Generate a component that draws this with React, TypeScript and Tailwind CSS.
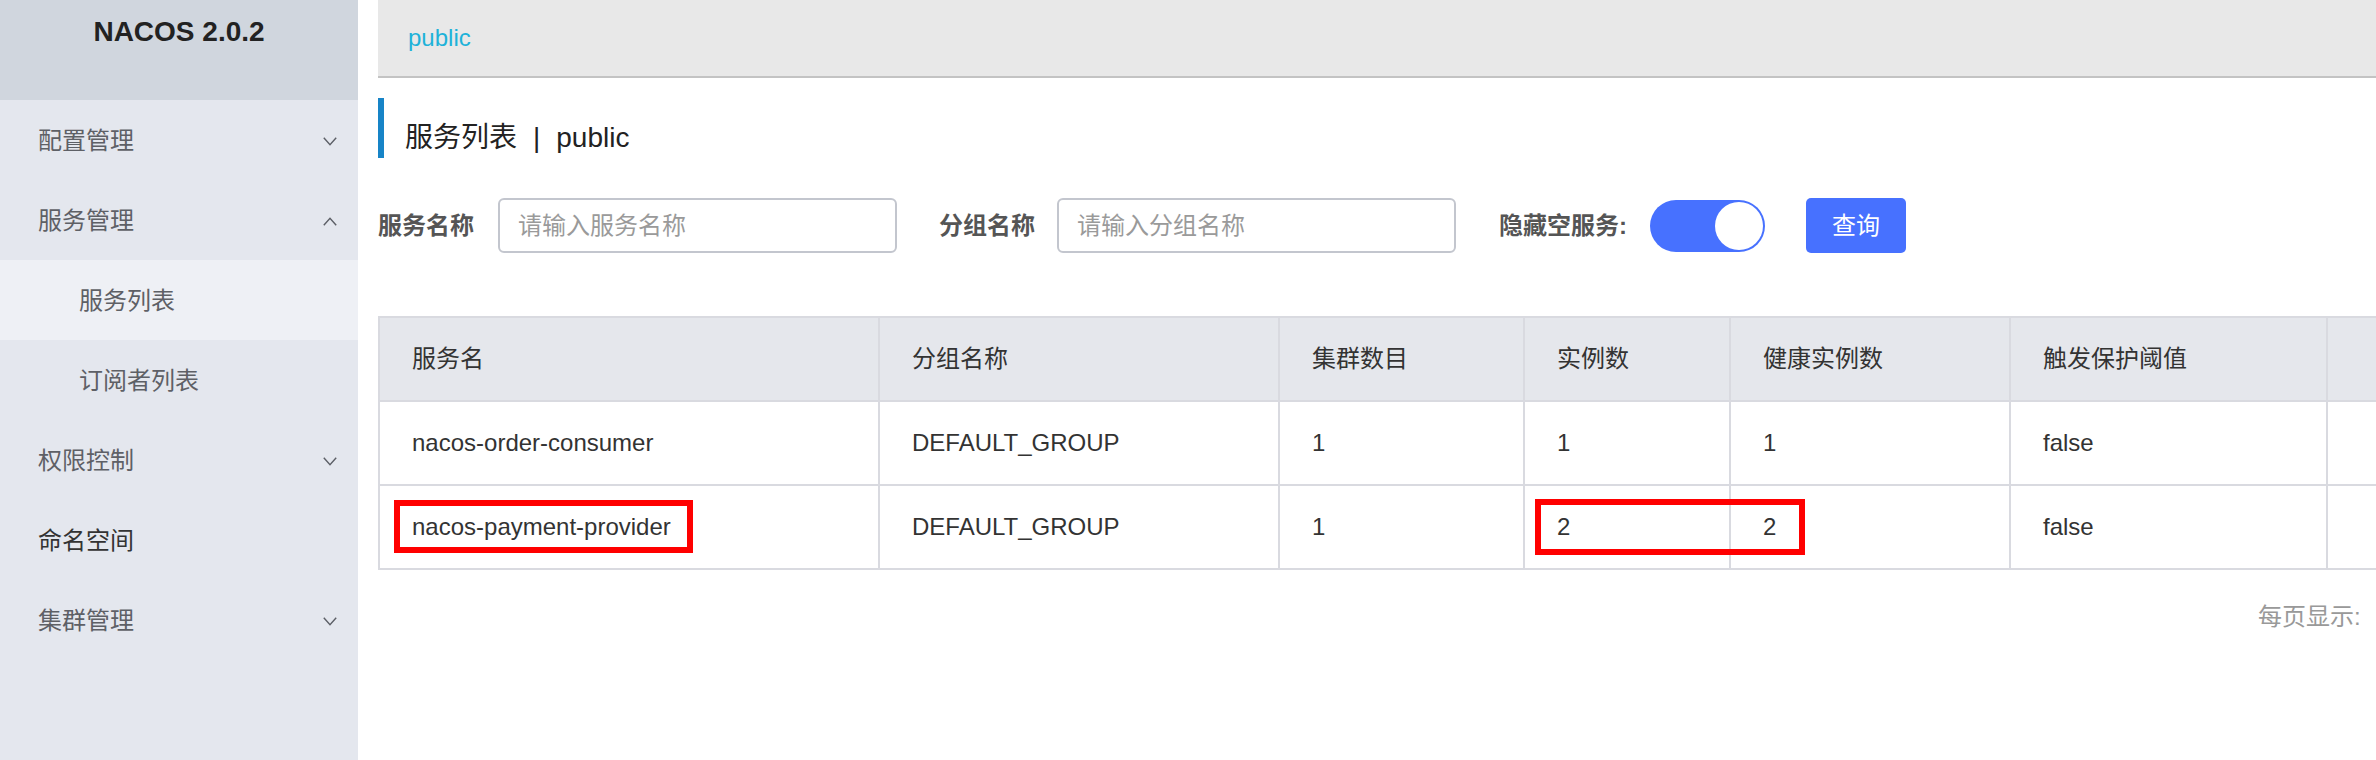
import React from 'react'

const Chevron = ({ up = false }: { up?: boolean }) => (
  <svg width="14" height="9" viewBox="0 0 14 9" fill="none" stroke="#5c5f66" strokeWidth="1.4">
    <polyline points={up ? '0.8,8.3 7,1.2 13.2,8.3' : '0.8,0.7 7,7.8 13.2,0.7'} />
  </svg>
)

const menuItems = [
  { name: '配置管理', chevron: 'down' },
  { name: '服务管理', chevron: 'up' },
  { name: '服务列表', sub: true, active: true },
  { name: '订阅者列表', sub: true },
  { name: '权限控制', chevron: 'down' },
  { name: '命名空间', dark: true },
  { name: '集群管理', chevron: 'down' },
]

const headers = ['服务名', '分组名称', '集群数目', '实例数', '健康实例数', '触发保护阈值', '']

const rows = [
  ['nacos-order-consumer', 'DEFAULT_GROUP', '1', '1', '1', 'false', ''],
  ['nacos-payment-provider', 'DEFAULT_GROUP', '1', '2', '2', 'false', ''],
]

const Sidebar = () => (
  <aside className="w-[358px] shrink-0 h-full bg-[#e4e7ee]">
    {/* Logo */}
    <div className="h-[100px] bg-[#d0d6de] pt-[18px] text-center">
      <span className="text-[28px] leading-[28px] font-bold text-[#222]">NACOS 2.0.2</span>
    </div>

    {menuItems.map((item) => (
      <div
        key={item.name}
        className={`h-[80px] flex items-center pt-[2px] pr-[21px] text-[24px] ${item.sub ? 'pl-[79px]' : 'pl-[38px]'} ${
          item.active ? 'bg-[#eef0f5]' : ''
        } ${item.dark ? 'text-[#333]' : 'text-[#5e6066]'}`}
      >
        <span className="flex-1">{item.name}</span>
        {item.chevron && <Chevron up={item.chevron === 'up'} />}
      </div>
    ))}
  </aside>
)

const FilterBar = () => (
  <div className="mt-[40px] h-[55px] flex items-center text-[24px]">
    <span className="font-bold text-[#555] mr-[24px]">服务名称</span>
    <div className="w-[399px] h-[55px] rounded-[6px] border-2 border-[#c3c6ce] flex items-center pl-[18px] text-[#9a9a9a]">
      请输入服务名称
    </div>
    <span className="font-bold text-[#555] ml-[42px] mr-[22px]">分组名称</span>
    <div className="w-[399px] h-[55px] rounded-[6px] border-2 border-[#c3c6ce] flex items-center pl-[18px] text-[#9a9a9a]">
      请输入分组名称
    </div>
    <span className="font-bold text-[#555] ml-[43px] mr-[23px]">隐藏空服务:</span>
    {/* toggle, on */}
    <div className="w-[115px] h-[52px] rounded-full bg-[#4771ff] p-[2px] flex justify-end">
      <div className="w-[48px] h-[48px] rounded-full bg-white" />
    </div>
    <button className="ml-[41px] w-[100px] h-[55px] rounded-[5px] bg-[#4771ff] text-white text-[24px]">
      查询
    </button>
  </div>
)

const ServiceTable = () => (
  <div className="mt-[63px] grid grid-cols-[500px_400px_245px_206px_280px_317px_240px] border-t-2 border-l-2 border-[#d9dae0] w-max text-[24px] text-[#333]">
    {headers.map((h, i) => (
      <div
        key={'h' + i}
        className="h-[84px] flex items-center pl-[32px] bg-[#e5e7ec] border-r-2 border-b-2 border-[#d9dae0]"
      >
        {h}
      </div>
    ))}
    {rows.map((row, r) =>
      row.map((cell, c) => (
        <div
          key={r + '-' + c}
          className="h-[84px] flex items-center pl-[32px] bg-white border-r-2 border-b-2 border-[#d9dae0]"
        >
          {cell}
        </div>
      ))
    )}
  </div>
)

export default function App() {
  return (
    <div className="flex h-screen w-full overflow-hidden bg-white font-['Liberation_Sans','Noto_Sans_CJK_SC',sans-serif]">
      <Sidebar />

      <main className="relative flex-1 min-w-0 overflow-hidden pl-[20px]">
        {/* Namespace bar */}
        <div className="h-[78px] bg-[#e8e8e8] border-b-2 border-[#c3c3c3] flex items-center pl-[30px]">
          <span className="text-[24px] text-[#1eb2d9]">public</span>
        </div>

        {/* Title */}
        <div className="mt-[20px] h-[60px] border-l-[6px] border-[#1784c7] flex items-end">
          <span className="pl-[21px] mb-[6px] text-[28px] leading-[28px] text-[#222]">
            服务列表<span className="mx-[16px]">|</span>public
          </span>
        </div>

        <FilterBar />
        <ServiceTable />

        {/* Pagination */}
        <div className="mt-[35px] pl-[1880px] text-[24px] leading-[24px] text-[#999] whitespace-nowrap">
          每页显示:
        </div>

        {/* Annotation boxes */}
        <div className="absolute left-[36px] top-[500px] w-[299px] h-[53px] border-[6px] border-[#ff0000]" />
        <div className="absolute left-[1177px] top-[499px] w-[270px] h-[56px] border-[6px] border-[#ff0000]" />
      </main>
    </div>
  )
}
